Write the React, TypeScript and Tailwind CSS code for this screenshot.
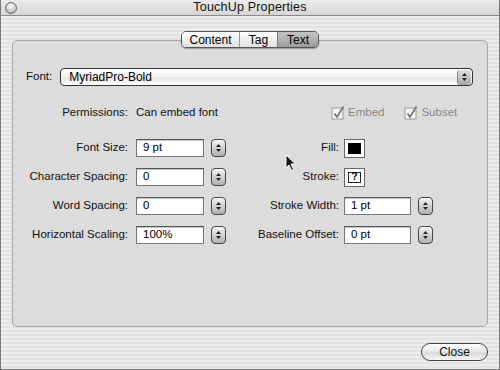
import React from 'react';

const FONT = { fontFamily: '"Liberation Sans", Arial, sans-serif' };

const Arrows = () => (
  <>
    <svg width="5" height="3" viewBox="0 0 5 3"><path d="M0 3 L2.5 0 L5 3 Z" fill="#222" /></svg>
    <svg width="5" height="3" viewBox="0 0 5 3"><path d="M0 0 L2.5 3 L5 0 Z" fill="#222" /></svg>
  </>
);

const Stepper = () => (
  <div className="w-[15px] h-[18px] rounded-[4px] border border-[#444] bg-[linear-gradient(#f4f4f4,#b0b0b0)] flex flex-col items-center justify-center gap-[2px] shadow-[inset_0_1px_0_#fff]">
    <Arrows />
  </div>
);

const Field = ({ value, w }: { value: string; w: string }) => (
  <div className={`${w} h-[18px] bg-white border border-[#777] border-t-[#555] shadow-[inset_0_1px_1px_rgba(0,0,0,0.25)] flex items-center pl-[6px] text-[11.5px] text-black`}>
    {value}
  </div>
);

const Check = ({ label }: { label: string }) => (
  <div className="flex items-center gap-[3px] text-[11.5px] text-[#888]">
    <svg width="14" height="14" viewBox="0 0 14 14">
      <rect x="1" y="2" width="11" height="11" fill="#f4f4f4" stroke="#999" />
      <path d="M3.5 7.5 L6 11 L12.5 0.5" fill="none" stroke="#777" strokeWidth="1.8" />
    </svg>
    <span>{label}</span>
  </div>
);

const LeftRow = ({ label, value }: { label: string; value: string }) => (
  <div className="flex items-center w-[230px]">
    <div className="w-[108px] text-right text-[11.5px] text-[#111] whitespace-nowrap">{label}</div>
    <div className="ml-[8px]"><Field value={value} w="w-[68px]" /></div>
    <div className="ml-[7px]"><Stepper /></div>
  </div>
);

const RightLabel = ({ children }: { children: React.ReactNode }) => (
  <div className="w-[89px] text-right text-[11.5px] text-[#111] whitespace-nowrap">{children}</div>
);

export default function App() {
  return (
    <div style={FONT} className="w-[500px] h-[370px] relative flex flex-col border-l border-r border-b border-[#777] bg-[repeating-linear-gradient(#ececec_0px,#ececec_2px,#e2e2e2_2px,#e2e2e2_4px)] overflow-hidden">
      {/* title bar */}
      <div className="h-[16px] shrink-0 relative flex items-center justify-center border-b border-[#8a8a8a] bg-[linear-gradient(#ebebeb,#d6d6d6)]">
        <div className="absolute left-[4px] top-[2px] w-[12px] h-[12px] rounded-full border border-[#666] bg-[radial-gradient(circle_at_50%_30%,#ffffff,#c8c8c8_60%,#9a9a9a)]" />
        <span className="text-[12.5px] text-[#111] tracking-[0.2px]">TouchUp Properties</span>
      </div>

      {/* body */}
      <div className="flex-1 flex flex-col px-[11px]">
        <div className="flex justify-center pt-[15px] relative z-10">
          <div className="flex h-[17px] rounded-[5px] border border-[#555] overflow-hidden text-[12px] shadow-[0_1px_1px_rgba(0,0,0,0.3)]">
            <div className="w-[58px] flex items-center justify-center bg-[linear-gradient(#ffffff,#e0e0e0)] border-r border-[#999]">Content</div>
            <div className="w-[38px] flex items-center justify-center bg-[linear-gradient(#ffffff,#e0e0e0)] border-r border-[#777]">Tag</div>
            <div className="w-[40px] flex items-center justify-center bg-[linear-gradient(#c4c4c4,#9c9c9c)]">Text</div>
          </div>
        </div>

        <div className="-mt-[8px] h-[287px] rounded-[5px] border border-[#a8a8a8] bg-[#dcdcdc] flex flex-col">
          {/* font row */}
          <div className="flex items-center pt-[27px] pl-[13px] pr-[14px]">
            <span className="text-[11.5px] text-[#111]">Font:</span>
            <div className="ml-[8px] flex-1 h-[18px] rounded-[4px] border border-[#333] bg-[linear-gradient(#ffffff,#f2f2f2_50%,#e4e4e4_55%,#ffffff)] flex items-center justify-between pl-[8px] pr-[1px] text-[12px] text-black">
              <span>MyriadPro-Bold</span>
              <div className="w-[14px] h-[15px] rounded-[3px] bg-[linear-gradient(#e0e0e0,#a8a8a8)] border-l border-[#888] flex flex-col items-center justify-center gap-[2px]">
                <Arrows />
              </div>
            </div>
          </div>

          {/* permissions */}
          <div className="flex items-center mt-[19px] h-[16px] whitespace-nowrap">
            <div className="w-[115px] text-right text-[11.5px] text-[#111]">Permissions:</div>
            <div className="ml-[8px] w-[195px] text-[11.5px] text-[#111]">Can embed font</div>
            <Check label="Embed" />
            <div className="ml-[20px]"><Check label="Subset" /></div>
          </div>

          {/* grid rows */}
          <div className="flex flex-col gap-[11px] mt-[18px] pl-[7px]">
            <div className="flex items-center h-[18px]">
              <LeftRow label="Font Size:" value="9 pt" />
              <RightLabel>Fill:</RightLabel>
              <div className="ml-[5px] w-[21px] h-[19px] border border-[#666] bg-white p-[3px]">
                <div className="w-full h-full bg-black" />
              </div>
            </div>
            <div className="flex items-center h-[18px]">
              <LeftRow label="Character Spacing:" value="0" />
              <RightLabel>Stroke:</RightLabel>
              <div className="ml-[5px] w-[21px] h-[19px] border border-[#666] bg-white p-[3px]">
                <div className="w-full h-full border border-[#222] flex items-center justify-center text-[10px] font-bold leading-none">?</div>
              </div>
            </div>
            <div className="flex items-center h-[18px]">
              <LeftRow label="Word Spacing:" value="0" />
              <RightLabel>Stroke Width:</RightLabel>
              <div className="ml-[5px]"><Field value="1 pt" w="w-[67px]" /></div>
              <div className="ml-[7px]"><Stepper /></div>
            </div>
            <div className="flex items-center h-[18px]">
              <LeftRow label="Horizontal Scaling:" value="100%" />
              <RightLabel>Baseline Offset:</RightLabel>
              <div className="ml-[5px]"><Field value="0 pt" w="w-[67px]" /></div>
              <div className="ml-[7px]"><Stepper /></div>
            </div>
          </div>
        </div>

        <div className="flex justify-end mt-[16px]">
          <div className="w-[67px] h-[18px] rounded-full border border-[#444] bg-[linear-gradient(#ffffff,#e6e6e6_50%,#d8d8d8_55%,#f6f6f6)] flex items-center justify-center text-[12px] text-[#111]">
            Close
          </div>
        </div>
      </div>

      {/* mouse pointer */}
      <svg className="absolute left-[284px] top-[154px]" width="12" height="18" viewBox="0 0 12 18">
        <path d="M1 1 L1 14 L4 11 L6.5 16.5 L8.5 15.5 L6 10 L10.5 10 Z" fill="#111" stroke="#fff" strokeWidth="1" />
      </svg>
    </div>
  );
}
